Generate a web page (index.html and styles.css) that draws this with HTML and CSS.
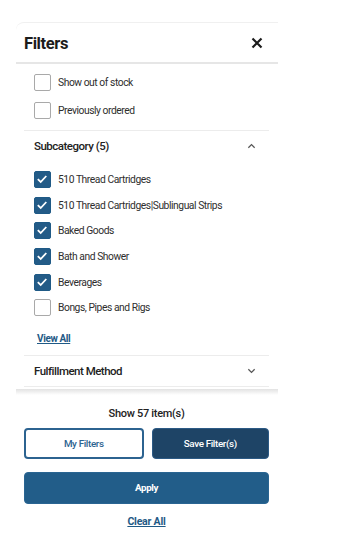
FILE: index.html
```html
<!DOCTYPE html>
<html>

<head>
	<meta charset="UTF-8">
	<title>Filters</title>
	<link rel="stylesheet" href="styles.css">
</head>

<body>
	<div class="drawer">
		<div class="drawer-header">
			<span class="drawer-title">Filters</span>
			<span class="drawer-close">
				<svg viewBox="0 0 12 12" width="12" height="12">
					<path d="M1.5 1.5L10.5 10.5M10.5 1.5L1.5 10.5" stroke="currentColor" stroke-width="2.2" fill="none" />
				</svg>
			</span>
		</div>
		<div class="drawer-body">
			<div class="group group-top">
				<label class="option"><span class="box"></span>Show out of stock</label>
				<label class="option"><span class="box"></span>Previously ordered</label>
			</div>
			<div class="group">
				<div class="group-head">
					<span>Subcategory (5)</span>
					<svg class="chevron" viewBox="0 0 10 6" width="9" height="6">
						<path d="M1.5 5L5 1.5L8.5 5" stroke="currentColor" stroke-width="1.4" fill="none" />
					</svg>
				</div>
				<div class="list">
					<label class="option checked"><span class="box"><svg viewBox="0 0 16 16" width="16" height="16"><path d="M3.8 8.2L6.7 11L12.3 5" stroke="#fff" stroke-width="1.8" fill="none" /></svg></span>510 Thread Cartridges</label>
					<label class="option checked"><span class="box"><svg viewBox="0 0 16 16" width="16" height="16"><path d="M3.8 8.2L6.7 11L12.3 5" stroke="#fff" stroke-width="1.8" fill="none" /></svg></span>510 Thread Cartridges|Sublingual Strips</label>
					<label class="option checked"><span class="box"><svg viewBox="0 0 16 16" width="16" height="16"><path d="M3.8 8.2L6.7 11L12.3 5" stroke="#fff" stroke-width="1.8" fill="none" /></svg></span>Baked Goods</label>
					<label class="option checked"><span class="box"><svg viewBox="0 0 16 16" width="16" height="16"><path d="M3.8 8.2L6.7 11L12.3 5" stroke="#fff" stroke-width="1.8" fill="none" /></svg></span>Bath and Shower</label>
					<label class="option checked"><span class="box"><svg viewBox="0 0 16 16" width="16" height="16"><path d="M3.8 8.2L6.7 11L12.3 5" stroke="#fff" stroke-width="1.8" fill="none" /></svg></span>Beverages</label>
					<label class="option"><span class="box"></span>Bongs, Pipes and Rigs</label>
				</div>
				<a class="view-all" href="#">View All</a>
			</div>
			<div class="group">
				<div class="group-head">
					<span>Fulfillment Method</span>
					<svg class="chevron" viewBox="0 0 10 6" width="9" height="6">
						<path d="M1.5 1L5 4.5L8.5 1" stroke="currentColor" stroke-width="1.4" fill="none" />
					</svg>
				</div>
			</div>
		</div>
		<div class="drawer-footer">
			<div class="count">Show 57 item(s)</div>
			<div class="btn-row">
				<button class="btn btn-outline">My Filters</button>
				<button class="btn btn-dark">Save Filter(s)</button>
			</div>
			<button class="btn btn-primary">Apply</button>
			<a class="clear-all" href="#">Clear All</a>
		</div>
	</div>
</body>

</html>
```

FILE: styles.css
```css
html,
body {
	margin: 0;
	padding: 0;
	background: #fff;
	font-family: Roboto, "Liberation Sans", Arial, sans-serif;
	color: #222;
}

.drawer {
	box-sizing: border-box;
	width: 262px;
	margin: 22px 0 0 16px;
	border-top: 1px solid #f0f0f0;
	border-top-left-radius: 8px;
}

.drawer-header {
	box-sizing: border-box;
	height: 41px;
	padding: 0 15px 0 8px;
	display: flex;
	align-items: center;
	justify-content: space-between;
	border-bottom: 2px solid #e6e6e6;
}

.drawer-title {
	font-size: 16.5px;
	font-weight: 700;
	letter-spacing: -0.4px;
	color: #1c1c1c;
	padding-top: 1px;
}

.drawer-close {
	display: flex;
	color: #1c1c1c;
}

.drawer-body {
	padding: 0 9px 0 8px;
}

.group {
	border-bottom: 1px solid #ececec;
}

.group-top {
	padding: 4px 0 6px;
}

.option {
	display: flex;
	align-items: center;
	height: 28px;
	padding-left: 10px;
	font-size: 10.3px;
	letter-spacing: -0.45px;
	color: #2e2e2e;
}

.list .option {
	height: 25.6px;
}

.box {
	box-sizing: border-box;
	width: 17px;
	height: 17px;
	margin-right: 7px;
	border: 1px solid #a9a9a9;
	border-radius: 2px;
	background: #fff;
	display: flex;
	flex-shrink: 0;
}

.option.checked .box {
	border-color: #1f5a86;
	background: #235b87;
}

.option.checked .box svg {
	margin: -1px;
}

.group-head {
	display: flex;
	align-items: center;
	justify-content: space-between;
	height: 30px;
	padding: 0 13px 0 10px;
	font-size: 11.5px;
	font-weight: 500;
	letter-spacing: -0.5px;
	color: #222;
}

.chevron {
	color: #555;
}

.list {
	padding-top: 6px;
}

.view-all {
	display: block;
	padding: 12px 0 11px 13px;
	font-size: 10px;
	font-weight: 700;
	letter-spacing: -0.4px;
	color: #1f5a86;
	text-decoration: underline;
}

.drawer-footer {
	margin-top: 2px;
	padding: 18px 9px 20px 8px;
	background: linear-gradient(#e2e2e2, #fff 6px);
	display: flex;
	flex-direction: column;
	align-items: stretch;
}

.count {
	text-align: center;
	font-size: 11px;
	font-weight: 500;
	letter-spacing: -0.3px;
	color: #222;
	margin-bottom: 8px;
}

.btn-row {
	display: flex;
	gap: 8px;
	margin-bottom: 13px;
}

.btn {
	box-sizing: border-box;
	height: 31px;
	border-radius: 4px;
	font-family: Roboto, "Liberation Sans", Arial, sans-serif;
	font-size: 9.8px;
	letter-spacing: -0.35px;
	cursor: pointer;
}

.btn-row .btn {
	flex: 1;
}

.btn-outline {
	background: #fff;
	border: 2px solid #2c6390;
	color: #2c6390;
	font-weight: 500;
}

.btn-dark {
	background: #1e4466;
	border: 1px solid #2c5a85;
	color: #fff;
	font-weight: 500;
}

.btn-primary {
	height: 32px;
	background: #225d89;
	border: 1px solid #2a6592;
	color: #fff;
	font-weight: 700;
	letter-spacing: -0.4px;
}

.clear-all {
	align-self: center;
	margin-top: 11px;
	font-size: 10.5px;
	font-weight: 700;
	letter-spacing: -0.2px;
	color: #1f5a86;
	text-decoration: underline;
}
```
